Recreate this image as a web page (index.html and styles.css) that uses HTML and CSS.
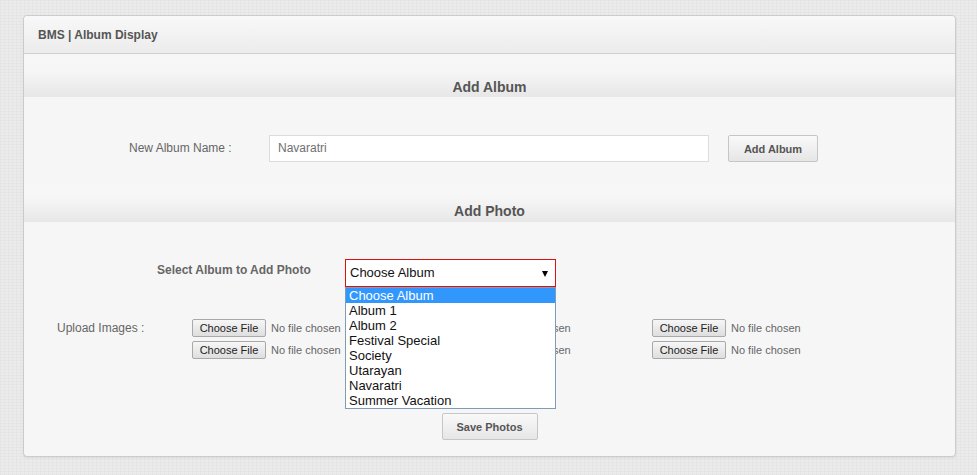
FILE: index.html
```html
<!DOCTYPE html>
<html>
<head>
<meta charset="utf-8">
<title>BMS | Album Display</title>
<link rel="stylesheet" href="styles.css">
</head>
<body>
<div class="panel">
  <div class="panel-head">BMS | Album Display</div>
  <div class="panel-body">
    <div class="band band-album">Add Album</div>
    <div class="row-album">
      <label class="lbl-album">New Album Name :</label>
      <div class="text-input">Navaratri</div>
      <button class="btn btn-add">Add Album</button>
    </div>
    <div class="band band-photo">Add Photo</div>
    <div class="row-select">
      <label class="lbl-select">Select Album to Add Photo</label>
      <div class="select-wrap">
        <div class="select">Choose Album<span class="arrow"></span></div>
        <ul class="dropdown">
          <li class="sel">Choose Album</li>
          <li>Album 1</li>
          <li>Album 2</li>
          <li>Festival Special</li>
          <li>Society</li>
          <li>Utarayan</li>
          <li>Navaratri</li>
          <li>Summer Vacation</li>
        </ul>
      </div>
    </div>
    <div class="row-upload">
      <label class="lbl-upload">Upload Images :</label>
      <div class="files">
        <div class="file"><span class="file-btn">Choose File</span><span class="file-txt">No file chosen</span></div>
        <div class="file"><span class="file-btn">Choose File</span><span class="file-txt">No file chosen</span></div>
        <div class="file"><span class="file-btn">Choose File</span><span class="file-txt">No file chosen</span></div>
        <div class="file"><span class="file-btn">Choose File</span><span class="file-txt">No file chosen</span></div>
        <div class="file"><span class="file-btn">Choose File</span><span class="file-txt">No file chosen</span></div>
        <div class="file"><span class="file-btn">Choose File</span><span class="file-txt">No file chosen</span></div>
      </div>
    </div>
    <div class="row-save">
      <button class="btn btn-save">Save Photos</button>
    </div>
  </div>
</div>
</body>
</html>
```
FILE: styles.css
```css
* { box-sizing: border-box; }
html, body { margin: 0; padding: 0; }
body {
  font-family: "Liberation Sans", Arial, sans-serif;
  background-color: #ebebeb;
  background-image:
    repeating-linear-gradient(0deg, rgba(0,0,0,0.018) 0 1px, transparent 1px 3px),
    repeating-linear-gradient(90deg, rgba(0,0,0,0.018) 0 1px, transparent 1px 4px);
  height: 475px;
  overflow: hidden;
  padding-top: 15px;
}
.panel {
  margin-left: 23px;
  width: 933px;
  border: 1px solid #cccccc;
  border-radius: 4px;
  background: #f6f6f6;
  box-shadow: 0 1px 2px rgba(0,0,0,0.08);
}
.panel-head {
  height: 38px;
  display: flex;
  align-items: center;
  padding-left: 14px;
  font-size: 12px;
  font-weight: bold;
  color: #555;
  border-bottom: 1px solid #cfcfcf;
  border-radius: 4px 4px 0 0;
  background: linear-gradient(to bottom, #f8f8f8 0%, #ececec 100%);
}
.panel-body {
  position: relative;
}
.band {
  text-align: center;
  font-size: 14px;
  font-weight: bold;
  color: #555;
  line-height: 14px;
  background: linear-gradient(to bottom, #f7f7f7 0%, #f6f6f6 40%, #e7e7e7 100%);
}
.band-album {
  height: 43px;
  padding-top: 26px;
}
.band-photo {
  height: 39px;
  padding-top: 21px;
  margin-top: 21px;
}
.row-album {
  display: flex;
  align-items: center;
  margin-top: 38px;
  padding-left: 105px;
}
.lbl-album {
  width: 140px;
  font-size: 12px;
  color: #666;
  margin-top: -2px;
}
.text-input {
  width: 440px;
  height: 27px;
  background: #fff;
  border: 1px solid #dcdcdc;
  padding-left: 8px;
  font-size: 12px;
  line-height: 25px;
  color: #707070;
}
.btn {
  font-family: "Liberation Sans", Arial, sans-serif;
  font-size: 11px;
  font-weight: bold;
  color: #555;
  border: 1px solid #c6c6c6;
  border-radius: 2px;
  background: linear-gradient(to bottom, #f9f9f9 0%, #e6e6e6 100%);
  padding: 0;
}
.btn-add {
  margin-left: 19px;
  width: 90px;
  height: 27px;
}
.row-select {
  display: flex;
  align-items: flex-start;
  margin-top: 37px;
  padding-left: 133px;
  position: relative;
  z-index: 2;
}
.lbl-select {
  width: 188px;
  font-size: 12px;
  font-weight: bold;
  color: #666;
  padding-top: 4px;
  line-height: 14px;
}
.select-wrap {
  position: relative;
  width: 211px;
}
.select {
  height: 28px;
  border: 1px solid #dd1111;
  background: #fff;
  font-size: 13px;
  color: #111;
  line-height: 26px;
  padding-left: 4px;
  position: relative;
}
.arrow {
  position: absolute;
  right: 7px;
  top: 11px;
  width: 0;
  height: 0;
  border-left: 3.5px solid transparent;
  border-right: 3.5px solid transparent;
  border-top: 6px solid #000;
}
.dropdown {
  position: absolute;
  top: 28px;
  left: 0;
  width: 211px;
  margin: 0;
  padding: 0;
  list-style: none;
  background: #fff;
  border: 1px solid #7f9db9;
  font-size: 13px;
  color: #111;
}
.dropdown li {
  height: 15px;
  line-height: 15px;
  padding-left: 3px;
}
.dropdown li.sel {
  background: #3297fd;
  color: #fff;
}
.row-upload {
  display: flex;
  align-items: flex-start;
  margin-top: 32px;
  padding-left: 33px;
}
.lbl-upload {
  width: 135px;
  font-size: 12px;
  color: #666;
  padding-top: 2px;
}
.files {
  display: grid;
  grid-template-columns: 230px 230px 230px;
  row-gap: 4px;
}
.file {
  display: flex;
  align-items: center;
  height: 18px;
}
.file-btn {
  display: inline-flex;
  align-items: center;
  justify-content: center;
  width: 74px;
  height: 18px;
  font-size: 11px;
  color: #222;
  border: 1px solid #a9a9a9;
  border-radius: 2px;
  background: linear-gradient(to bottom, #f6f6f6 0%, #dedede 100%);
}
.file-txt {
  margin-left: 5px;
  font-size: 11px;
  color: #666;
}
.row-save {
  display: flex;
  justify-content: center;
  margin-top: 54px;
  padding-bottom: 16px;
}
.btn-save {
  width: 96px;
  height: 27px;
}
```
